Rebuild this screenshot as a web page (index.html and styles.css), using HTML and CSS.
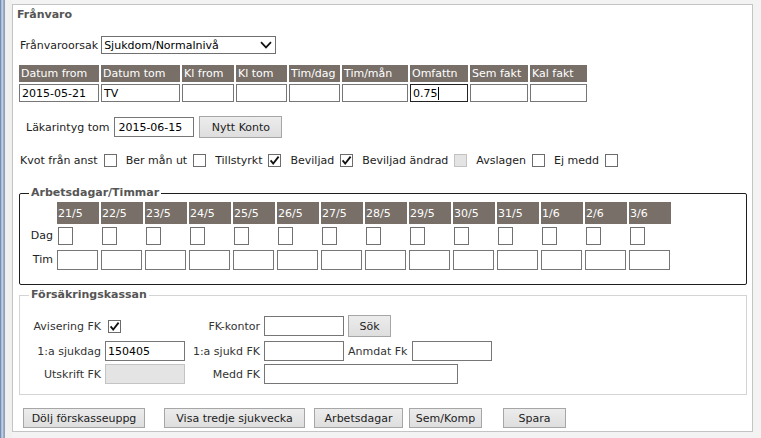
FILE: index.html
```html
<!DOCTYPE html>
<html lang="sv">
<head>
<meta charset="utf-8">
<title>Frånvaro</title>
<link rel="stylesheet" href="styles.css">
</head>
<body>
<div class="app">
  <div class="edge"></div>
  <div class="gutter"></div>
  <div class="main">
    <div class="panel">
      <div class="title">Frånvaro</div>

      <div class="cause-row">
        <span class="lbl">Frånvaroorsak</span>
        <div class="select">
          <span>Sjukdom/Normalnivå</span>
          <svg class="chev" width="12" height="8" viewBox="0 0 12 8"><path d="M1 1.2 L6 6.4 L11 1.2" fill="none" stroke="#111" stroke-width="1.7"/></svg>
        </div>
      </div>

      <div class="period">
        <div class="th">Datum from</div>
        <div class="th">Datum tom</div>
        <div class="th">Kl from</div>
        <div class="th">Kl tom</div>
        <div class="th">Tim/dag</div>
        <div class="th">Tim/mån</div>
        <div class="th">Omfattn</div>
        <div class="th">Sem fakt</div>
        <div class="th">Kal fakt</div>
        <div class="inp">2015-05-21</div>
        <div class="inp">TV</div>
        <div class="inp"></div>
        <div class="inp"></div>
        <div class="inp"></div>
        <div class="inp"></div>
        <div class="inp focus">0.75<span class="caret"></span></div>
        <div class="inp"></div>
        <div class="inp"></div>
      </div>

      <div class="lak-row">
        <span class="lbl">Läkarintyg tom</span>
        <div class="inp lak-inp">2015-06-15</div>
        <div class="btn lak-btn">Nytt Konto</div>
      </div>

      <div class="check-row">
        <span class="lbl">Kvot från anst</span><span class="cb"></span>
        <span class="lbl">Ber mån ut</span><span class="cb"></span>
        <span class="lbl">Tillstyrkt</span><span class="cb"><svg width="11" height="11" viewBox="0 0 11 11"><path d="M1.6 5.4 L4.2 8.6 L9.6 1.6" fill="none" stroke="#111" stroke-width="1.8"/></svg></span>
        <span class="lbl">Beviljad</span><span class="cb"><svg width="11" height="11" viewBox="0 0 11 11"><path d="M1.6 5.4 L4.2 8.6 L9.6 1.6" fill="none" stroke="#111" stroke-width="1.8"/></svg></span>
        <span class="lbl">Beviljad ändrad</span><span class="cb disabled"></span>
        <span class="lbl">Avslagen</span><span class="cb"></span>
        <span class="lbl">Ej medd</span><span class="cb"></span>
      </div>

      <fieldset class="fs fs-days">
        <legend>Arbetsdagar/Timmar</legend>
        <div class="days">
          <div class="dlbl"></div>
          <div class="dh">21/5</div><div class="dh">22/5</div><div class="dh">23/5</div><div class="dh">24/5</div><div class="dh">25/5</div><div class="dh">26/5</div><div class="dh">27/5</div><div class="dh">28/5</div><div class="dh">29/5</div><div class="dh">30/5</div><div class="dh">31/5</div><div class="dh">1/6</div><div class="dh">2/6</div><div class="dh">3/6</div>
          <div class="dlbl dag">Dag</div>
          <div class="dbox"></div><div class="dbox"></div><div class="dbox"></div><div class="dbox"></div><div class="dbox"></div><div class="dbox"></div><div class="dbox"></div><div class="dbox"></div><div class="dbox"></div><div class="dbox"></div><div class="dbox"></div><div class="dbox"></div><div class="dbox"></div><div class="dbox"></div>
          <div class="dlbl tim">Tim</div>
          <div class="tbox"></div><div class="tbox"></div><div class="tbox"></div><div class="tbox"></div><div class="tbox"></div><div class="tbox"></div><div class="tbox"></div><div class="tbox"></div><div class="tbox"></div><div class="tbox"></div><div class="tbox"></div><div class="tbox"></div><div class="tbox"></div><div class="tbox"></div>
        </div>
      </fieldset>

      <fieldset class="fs fs-fk">
        <legend>Försäkringskassan</legend>
        <div class="fk-row r1">
          <span class="fl1">Avisering FK</span>
          <div class="fcell"><span class="cb fk-cb"><svg width="11" height="11" viewBox="0 0 11 11"><path d="M1.6 5.4 L4.2 8.6 L9.6 1.6" fill="none" stroke="#111" stroke-width="1.8"/></svg></span></div>
          <span class="fl2">FK-kontor</span>
          <div class="inp f80"></div>
          <div class="btn sok">Sök</div>
        </div>
        <div class="fk-row r2">
          <span class="fl1">1:a sjukdag</span>
          <div class="inp f80">150405</div>
          <span class="fl2">1:a sjukd FK</span>
          <div class="inp f80"></div>
          <span class="fl3">Anmdat Fk</span>
          <div class="inp f80"></div>
        </div>
        <div class="fk-row r3">
          <span class="fl1">Utskrift FK</span>
          <div class="inp f80 dis"></div>
          <span class="fl2">Medd FK</span>
          <div class="inp fwide"></div>
        </div>
      </fieldset>

      <div class="btn-row">
        <div class="btn b-dolj">Dölj förskasseuppg</div>
        <div class="btn b-visa">Visa tredje sjukvecka</div>
        <div class="btn b-arb">Arbetsdagar</div>
        <div class="btn b-sem">Sem/Komp</div>
        <div class="btn b-spara">Spara</div>
      </div>
    </div>
  </div>
</div>
</body>
</html>
```

FILE: styles.css
```css
* { box-sizing: border-box; }
html, body { margin: 0; padding: 0; }
body {
  background: #f3f3f3;
  font-family: "DejaVu Sans", Verdana, sans-serif;
  font-size: 11px;
  color: #222;
  width: 761px;
  height: 438px;
  overflow: hidden;
}
.app { display: flex; height: 438px; }
.edge {
  width: 5px;
  background: linear-gradient(to right, #5f7697 0, #8ea4c4 1px, #c9d6ea 2px, #b4c5df 3px, #7d95b8 4px, #a8a8a8 5px);
}
.gutter { width: 7px; background: #f0f0f0; }
.main { flex: 1; }
.panel {
  margin-top: 4px;
  width: 741px;
  height: 428px;
  background: #fff;
  border: 1px solid #c4c4c4;
  padding-left: 6px;
}
.title {
  margin: 3px 0 0 -2px;
  line-height: 14px;
  font-weight: bold;
  color: #555;
}
.lbl { white-space: nowrap; }

.cause-row {
  margin: 14px 0 0 1px;
  height: 18px;
  display: flex;
  align-items: center;
  gap: 3px;
}
.select {
  width: 175px;
  height: 18px;
  border: 1px solid #6f6f6f;
  display: flex;
  align-items: center;
  justify-content: space-between;
  padding: 0 2px 0 2px;
  color: #000;
  font-size: 11px;
}
.chev { margin-right: 1px; }

.period {
  margin-top: 11px;
  display: grid;
  grid-template-columns: 80px 79px 52px 51px 51px 66px 58px 58px 57px;
  grid-template-rows: 17px 18px;
  column-gap: 2px;
  row-gap: 2px;
}
.th {
  background: #786f68;
  color: #fff;
  line-height: 17px;
  padding-left: 2px;
  white-space: nowrap;
}
.inp {
  border: 1px solid #767676;
  background: #fff;
  color: #000;
  padding-left: 2px;
  display: flex;
  align-items: center;
  white-space: nowrap;
}
.inp.focus { border-color: #222; }
.caret { display: inline-block; width: 1px; height: 13px; background: #000; margin-left: 0; }

.lak-row {
  margin: 14px 0 0 7px;
  height: 22px;
  display: flex;
  align-items: center;
}
.lak-inp { width: 80px; height: 20px; margin-left: 5px; padding-left: 3px; }
.btn {
  border: 1px solid #a6a6a6;
  background: linear-gradient(#ececec, #dedede);
  color: #222;
  display: flex;
  align-items: center;
  justify-content: center;
  white-space: nowrap;
}
.lak-btn { width: 83px; height: 22px; margin-left: 5px; }

.check-row {
  margin: 16px 0 0 1px;
  height: 13px;
  display: flex;
  align-items: center;
}
.check-row .lbl { margin-right: 6px; }
.check-row .cb { margin-right: 9px; }
.cb {
  width: 13px;
  height: 13px;
  border: 1px solid #6c6c6c;
  background: #fff;
  display: inline-flex;
  align-items: center;
  justify-content: center;
  flex: none;
}
.cb.disabled { background: #e4e4e4; border-color: #c2c2c2; }

.fs {
  margin: 0;
  padding: 0;
  min-width: 0;
  width: 728px;
}
.fs legend {
  margin-left: 9px;
  padding: 0 2px;
  line-height: 14px;
  font-weight: bold;
  color: #555;
}
.fs-days {
  margin-top: 19px;
  border: 1px solid #1e1e1e;
  border-radius: 2px;
  padding: 2px 0 14px 0;
}
.days {
  display: grid;
  grid-template-columns: 35px repeat(14, 42px);
  grid-template-rows: 22px 21px 25px;
  column-gap: 2px;
}
.dh {
  background: #786f68;
  color: #fff;
  padding: 3px 0 0 1px;
  line-height: 18px;
}
.dlbl { text-align: right; padding-right: 2px; align-self: end; }
.dlbl.dag { line-height: 18px; }
.dlbl.tim { line-height: 20px; }
.dbox {
  align-self: end;
  justify-self: start;
  margin-left: 1px;
  width: 15px;
  height: 18px;
  border: 1px solid #707070;
}
.tbox {
  align-self: end;
  width: 41px;
  height: 20px;
  border: 1px solid #767676;
}

.fs-fk {
  margin-top: 3px;
  border: 1px solid #d4d4d4;
  padding: 13px 0 10px 0;
}
.fk-row {
  display: flex;
  align-items: center;
  height: 20px;
}
.fk-row.r1 { height: 22px; }
.fk-row.r2 { margin-top: 4px; }
.fk-row.r3 { margin-top: 3px; }
.fl1 { width: 81px; text-align: right; margin-right: 4px; white-space: nowrap; color: #333; }
.fl2 { width: 71px; margin-left: 4px; margin-right: 4px; text-align: right; white-space: nowrap; color: #333; }
.fl3 { margin-left: 4px; margin-right: 5px; white-space: nowrap; color: #333; }
.fcell { width: 80px; display: flex; }
.fk-cb { margin-left: 3px; }
.f80 { width: 80px; height: 20px; }
.fwide { width: 194px; height: 20px; }
.inp.dis { background: #e4e4e4; border-color: #c4c4c4; }
.sok { width: 43px; height: 22px; margin-left: 4px; }

.btn-row {
  margin: 13px 0 0 4px;
  height: 20px;
  display: flex;
}
.btn-row .btn { height: 20px; }
.b-dolj { width: 122px; }
.b-visa { width: 141px; margin-left: 19px; }
.b-arb { width: 89px; margin-left: 9px; }
.b-sem { width: 73px; margin-left: 6px; }
.b-spara { width: 63px; margin-left: 21px; }
```
